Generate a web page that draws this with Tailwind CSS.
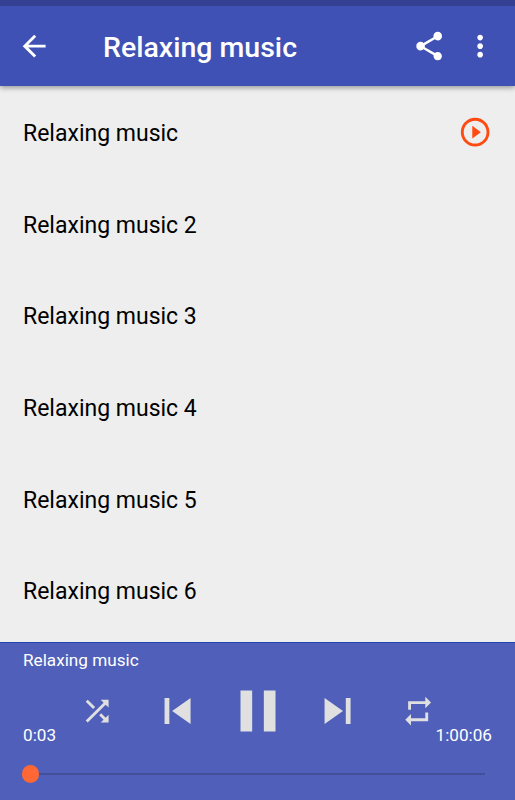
<!DOCTYPE html>
<html lang="en">
<head>
<meta charset="utf-8">
<title>Relaxing music</title>
<script src="https://cdn.jsdelivr.net/npm/@tailwindcss/browser@4"></script>
</head>
<body class="h-[800px] w-[515px] overflow-hidden bg-[#eeeeee] font-['Roboto',sans-serif]">
<div class="flex h-full flex-col">
  <header class="relative z-10 h-[86px] shrink-0 border-t-[6px] border-[#344192] bg-[#3f51b5] shadow-[0_2px_5px_rgba(0,0,0,0.35)]">
    <div class="flex h-20 items-center pl-[17px] pr-[17.3px]">
      <svg class="size-[34.3px] shrink-0" viewBox="0 0 24 24" fill="#fff"><path d="M20 11H7.83l5.59-5.59L12 4l-8 8 8 8 1.41-1.41L7.83 13H20v-2z"/></svg>
      <h1 class="ml-[51.7px] flex-1 whitespace-nowrap pt-[4px] text-[28.5px] font-medium leading-none text-white">Relaxing music</h1>
      <svg class="size-[34.3px] shrink-0" viewBox="0 0 24 24" fill="#fff"><path d="M18 16.08c-.76 0-1.44.3-1.96.77L8.91 12.7c.05-.23.09-.46.09-.7s-.04-.47-.09-.7l7.05-4.11c.54.5 1.25.81 2.04.81 1.66 0 3-1.34 3-3s-1.34-3-3-3-3 1.34-3 3c0 .24.04.47.09.7L8.04 9.81C7.5 9.31 6.79 9 6 9c-1.66 0-3 1.34-3 3s1.34 3 3 3c.79 0 1.5-.31 2.04-.81l7.12 4.16c-.05.21-.08.43-.08.65 0 1.61 1.31 2.92 2.92 2.92s2.92-1.31 2.92-2.92-1.31-2.92-2.92-2.92z"/></svg>
      <svg class="ml-[17px] size-[34.3px] shrink-0" viewBox="0 0 24 24" fill="#fff"><path d="M12 8c1.1 0 2-.9 2-2s-.9-2-2-2-2 .9-2 2 .9 2 2 2zm0 2c-1.1 0-2 .9-2 2s.9 2 2 2 2-.9 2-2-.9-2-2-2zm0 6c-1.1 0-2 .9-2 2s.9 2 2 2 2-.9 2-2-.9-2-2-2z"/></svg>
    </div>
  </header>
  <ul class="h-[556px] shrink-0 overflow-hidden text-[23px] leading-none text-black">
    <li class="flex h-[91.6px] items-center justify-between pl-[23px] pr-[23px]"><span class="pt-[4px]">Relaxing music</span>
      <svg class="size-[34.3px] shrink-0" viewBox="0 0 24 24" fill="#ff4a12"><path d="M10 16.5l6-4.5-6-4.5v9zM12 2C6.48 2 2 6.48 2 12s4.48 10 10 10 10-4.48 10-10S17.52 2 12 2zm0 18c-4.41 0-8-3.59-8-8s3.59-8 8-8 8 3.59 8 8-3.59 8-8 8z"/></svg>
    </li>
    <li class="flex h-[91.6px] items-center pl-[23px] pt-[4px]">Relaxing music 2</li>
    <li class="flex h-[91.6px] items-center pl-[23px] pt-[4px]">Relaxing music 3</li>
    <li class="flex h-[91.6px] items-center pl-[23px] pt-[4px]">Relaxing music 4</li>
    <li class="flex h-[91.6px] items-center pl-[23px] pt-[4px]">Relaxing music 5</li>
    <li class="flex h-[91.6px] items-center pl-[23px] pt-[4px]">Relaxing music 6</li>
  </ul>
  <footer class="flex h-[158px] shrink-0 flex-col border-t border-[#2443ae] bg-[#5060ba] text-[17.15px] leading-5 text-white">
    <div class="h-5 pl-[23px] mt-[7px]">Relaxing music</div>
    <div class="-mt-px flex h-[84px] items-center justify-center">
      <div class="flex w-20 justify-center"><svg class="size-[34.3px]" viewBox="0 0 24 24" fill="#e0e0e0"><path d="M10.59 9.17L5.41 4 4 5.41l5.17 5.17 1.42-1.41zM14.5 4l2.04 2.04L4 18.59 5.41 20 17.96 7.46 20 9.5V4h-5.5zm.33 9.41l-1.41 1.41 3.13 3.13L14.5 20H20v-5.5l-2.04 2.04-3.13-3.13z"/></svg></div>
      <div class="flex w-20 justify-center"><svg class="size-[52px]" viewBox="0 0 24 24" fill="#e0e0e0"><path d="M5.8 6h2.2v12H5.8zm3.5 6l8.5 6V6z"/></svg></div>
      <div class="flex w-20 justify-center"><svg class="size-[70px]" viewBox="0 0 24 24" fill="#e0e0e0"><path d="M6 19h4V5H6v14zm8-14v14h4V5h-4z"/></svg></div>
      <div class="flex w-20 justify-center"><svg class="size-[52px]" viewBox="0 0 24 24" fill="#e0e0e0"><path d="M5.8 18l8.5-6L5.8 6v12zM15.6 6v12h2.2V6h-2.2z"/></svg></div>
      <div class="flex w-20 justify-center pl-px"><svg class="size-[34.3px]" viewBox="0 0 24 24" fill="#e0e0e0"><path d="M7 7h10v3l4-4-4-4v3H5v6h2V7zm10 10H7v-3l-4 4 4 4v-3h12v-6h-2v4z"/></svg></div>
    </div>
    <div class="-mt-7 flex h-5 justify-between px-[23px]"><span>0:03</span><span>1:00:06</span></div>
    <div class="mt-5 flex h-[18px] items-center pl-[21.6px] pr-[30px]">
      <div class="size-[17.5px] shrink-0 rounded-full bg-[#ff6734]"></div>
      <div class="h-[2px] flex-1 bg-[#435097]"></div>
    </div>
  </footer>
</div>
</body>
</html>
